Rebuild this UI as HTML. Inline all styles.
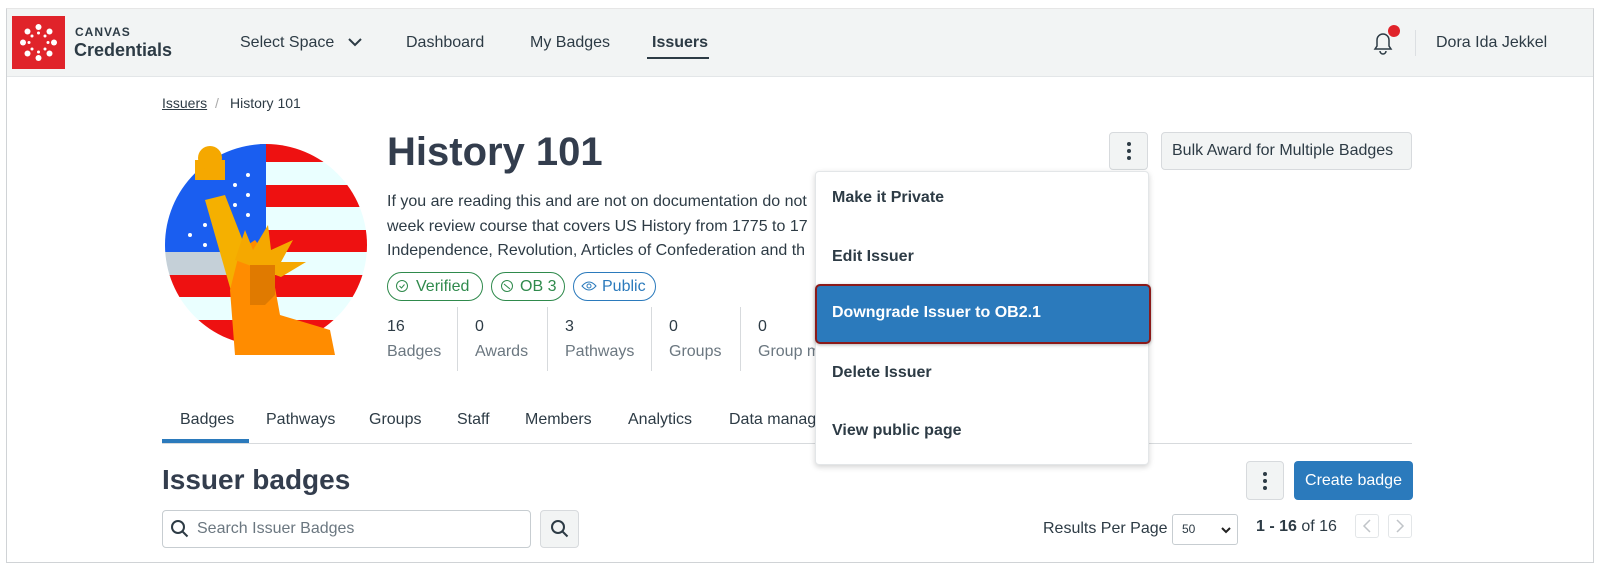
<!DOCTYPE html>
<html><head><meta charset="utf-8"><style>
*{margin:0;padding:0;box-sizing:border-box}
body{width:1600px;height:576px;background:#fff;font-family:"Liberation Sans",sans-serif;color:#2d3b45;position:relative;overflow:hidden}
.a{position:absolute;white-space:nowrap}
.frame{position:absolute;left:6px;top:8px;width:1588px;height:555px;border:1px solid #d0d3d6;border-top:1px solid #e6e6e6}
.hdr{position:absolute;left:7px;top:9px;width:1586px;height:68px;background:#f2f4f4;border-bottom:1px solid #e3e6e8}
.nav{font-size:16px;color:#2d3b45}
.btn{position:absolute;background:#f2f4f4;border:1px solid #d7dadd;border-radius:4px}
.pill{position:absolute;height:29px;border:1px solid #2f8a4c;border-radius:15px;color:#2f8a4c;font-size:16px;line-height:27px;padding-left:28px}
.stat{position:absolute;font-size:16px}
.vl{position:absolute;top:307px;width:1px;height:64px;background:#d7dadd}
.tab{position:absolute;top:411px;font-size:16px}
.mi{position:absolute;left:832px;font-size:16px;font-weight:bold;color:#2d3b45}
.k{position:absolute;width:4px;height:4px;border-radius:2px;background:#2d3b45}
</style></head><body>
<div class="frame"></div>
<div class="hdr"></div>
<!-- logo -->
<div class="a" style="left:12px;top:16px;width:53px;height:53px;background:#e0232a"></div>
<svg class="a" style="left:12px;top:16px" width="53" height="53" viewBox="0 0 53 53">
<g fill="#fff"><circle cx="26.5" cy="11" r="3"/><circle cx="26.5" cy="42" r="3"/><circle cx="11" cy="26.5" r="3"/><circle cx="42" cy="26.5" r="3"/><circle cx="15.5" cy="15.5" r="3"/><circle cx="37.5" cy="15.5" r="3"/><circle cx="15.5" cy="37.5" r="3"/><circle cx="37.5" cy="37.5" r="3"/>
<circle cx="26.5" cy="17" r="1.5"/><circle cx="26.5" cy="36" r="1.5"/><circle cx="17" cy="26.5" r="1.5"/><circle cx="36" cy="26.5" r="1.5"/><circle cx="20" cy="20" r="1.5"/><circle cx="33" cy="20" r="1.5"/><circle cx="20" cy="33" r="1.5"/><circle cx="33" cy="33" r="1.5"/></g></svg>
<div class="a" style="left:75px;top:25px;font-size:12px;font-weight:bold;letter-spacing:1px">CANVAS</div>
<div class="a" style="left:74px;top:40px;font-size:18px;font-weight:bold">Credentials</div>
<div class="a nav" style="left:240px;top:34px">Select Space</div>
<svg class="a" style="left:347px;top:36px" width="16" height="12"><path d="M2 3l6 6 6-6" stroke="#2d3b45" stroke-width="2" fill="none"/></svg>
<div class="a nav" style="left:406px;top:34px">Dashboard</div>
<div class="a nav" style="left:530px;top:34px">My Badges</div>
<div class="a nav" style="left:652px;top:34px;font-weight:bold">Issuers</div>
<div class="a" style="left:647px;top:57px;width:62px;height:2px;background:#2d3b45"></div>
<svg class="a" style="left:1370px;top:30px" width="26" height="26" viewBox="0 0 26 26"><path d="M5 19h16l-2-3v-6a6 6 0 0 0-12 0v6z M10 21a3 3 0 0 0 6 0" stroke="#2d3b45" stroke-width="1.5" fill="none"/></svg>
<div class="a" style="left:1388px;top:25px;width:12px;height:12px;border-radius:6px;background:#e0232a"></div>
<div class="a" style="left:1415px;top:30px;width:1px;height:26px;background:#dcdfe2"></div>
<div class="a nav" style="left:1436px;top:34px">Dora Ida Jekkel</div>
<!-- breadcrumb -->
<div class="a" style="left:162px;top:95px;font-size:14px;text-decoration:underline">Issuers</div>
<div class="a" style="left:215px;top:95px;font-size:14px;color:#aaa">/</div>
<div class="a" style="left:230px;top:95px;font-size:14px">History 101</div>
<!-- image -->
<svg class="a" style="left:160px;top:140px" width="210" height="215" viewBox="0 0 210 215">
<defs><clipPath id="c"><circle cx="106" cy="105" r="101"/></clipPath></defs>
<g clip-path="url(#c)">
<rect x="0" y="0" width="210" height="215" fill="#eaffff"/>
<g fill="#ee1111"><rect x="100" y="0" width="110" height="22"/><rect x="100" y="45" width="110" height="22"/><rect x="100" y="90" width="110" height="22"/><rect x="0" y="135" width="210" height="22"/><rect x="0" y="180" width="210" height="30"/></g>
<rect x="0" y="0" width="106" height="112" fill="#1a5ef0"/>
<rect x="0" y="112" width="100" height="23" fill="#c5d0d8"/>
<g fill="#fff"><circle cx="88" cy="35" r="2"/><circle cx="75" cy="45" r="2"/><circle cx="88" cy="55" r="2"/><circle cx="75" cy="65" r="2"/><circle cx="88" cy="75" r="2"/><circle cx="45" cy="85" r="2"/><circle cx="30" cy="95" r="2"/><circle cx="45" cy="105" r="2"/><circle cx="60" cy="75" r="2"/></g>
</g>
<path d="M45 60 l20 -5 l35 90 l-25 20z" fill="#f5b000"/>
<rect x="35" y="20" width="30" height="20" fill="#f5a800"/>
<ellipse cx="50" cy="18" rx="12" ry="12" fill="#f5a800"/>
<path d="M70 150 L80 110 L95 100 L110 120 L120 175 L170 190 L175 215 L75 215z" fill="#ff8c00"/>
<path d="M75 120 l10 -30 l8 20 l15 -25 l3 25 l22 -10 l-12 22 l25 0 l-25 15z" fill="#f5a800"/>
<path d="M90 125 h25 v30 l-10 10 h-15z" fill="#e07a00"/>
</svg>
<div class="a" style="left:387px;top:130px;font-size:40px;font-weight:bold;color:#333d4d">History 101</div>
<div class="a" style="left:387px;top:190px;font-size:16px;line-height:24.5px">If you are reading this and are not on documentation do not<br>week review course that covers US History from 1775 to 17<br>Independence, Revolution, Articles of Confederation and th</div>
<div class="pill" style="left:387px;top:272px;width:96px">Verified</div>
<svg class="a" style="left:395px;top:279px" width="14" height="14"><circle cx="7" cy="7" r="5.5" stroke="#2f8a4c" fill="none"/><path d="M4.5 7l2 2 3-3.5" stroke="#2f8a4c" fill="none"/></svg>
<div class="pill" style="left:491px;top:272px;width:74px">OB 3</div>
<svg class="a" style="left:500px;top:279px" width="14" height="14"><circle cx="7" cy="7" r="5.5" stroke="#2f8a4c" fill="none"/><path d="M4 5l6 5" stroke="#2f8a4c"/></svg>
<div class="pill" style="left:573px;top:272px;width:83px;border-color:#2b7abc;color:#2b7abc">Public</div>
<svg class="a" style="left:581px;top:280px" width="16" height="12"><path d="M1 6q7-8 14 0q-7 8-14 0z" stroke="#2b7abc" fill="none"/><circle cx="8" cy="6" r="2" stroke="#2b7abc" fill="none"/></svg>
<div class="stat" style="left:387px;top:318px">16</div><div class="stat" style="left:387px;top:343px;color:#6b7780">Badges</div>
<div class="vl" style="left:457px"></div>
<div class="stat" style="left:475px;top:318px">0</div><div class="stat" style="left:475px;top:343px;color:#6b7780">Awards</div>
<div class="vl" style="left:547px"></div>
<div class="stat" style="left:565px;top:318px">3</div><div class="stat" style="left:565px;top:343px;color:#6b7780">Pathways</div>
<div class="vl" style="left:651px"></div>
<div class="stat" style="left:669px;top:318px">0</div><div class="stat" style="left:669px;top:343px;color:#6b7780">Groups</div>
<div class="vl" style="left:740px"></div>
<div class="stat" style="left:758px;top:318px">0</div><div class="stat" style="left:758px;top:343px;color:#6b7780">Group m</div>
<!-- top right buttons -->
<div class="btn" style="left:1109px;top:132px;width:39px;height:38px"></div>
<div class="k" style="left:1127px;top:142px"></div><div class="k" style="left:1127px;top:149px"></div><div class="k" style="left:1127px;top:156px"></div>
<div class="btn" style="left:1161px;top:132px;width:251px;height:38px"></div>
<div class="a" style="left:1172px;top:142px;font-size:16px">Bulk Award for Multiple Badges</div>
<!-- tabs -->
<div class="a" style="left:162px;top:443px;width:1250px;height:1px;background:#d7dadd"></div>
<div class="a" style="left:162px;top:439px;width:87px;height:4px;background:#2b7abc"></div>
<div class="tab" style="left:180px">Badges</div>
<div class="tab" style="left:266px">Pathways</div>
<div class="tab" style="left:369px">Groups</div>
<div class="tab" style="left:457px">Staff</div>
<div class="tab" style="left:525px">Members</div>
<div class="tab" style="left:628px">Analytics</div>
<div class="tab" style="left:729px">Data manag</div>
<div class="a" style="left:162px;top:464px;font-size:28px;font-weight:bold;color:#333d4d">Issuer badges</div>
<div class="a" style="left:162px;top:510px;width:369px;height:38px;border:1px solid #c7cdd1;border-radius:4px"></div>
<svg class="a" style="left:170px;top:519px" width="20" height="20"><circle cx="8" cy="8" r="6" stroke="#2d3b45" stroke-width="2" fill="none"/><path d="M12.5 12.5l5 5" stroke="#2d3b45" stroke-width="2"/></svg>
<div class="a" style="left:197px;top:520px;font-size:16px;color:#6b7780">Search Issuer Badges</div>
<div class="btn" style="left:540px;top:510px;width:39px;height:38px"></div>
<svg class="a" style="left:550px;top:519px" width="20" height="20"><circle cx="8" cy="8" r="6" stroke="#2d3b45" stroke-width="2" fill="none"/><path d="M12.5 12.5l5 5" stroke="#2d3b45" stroke-width="2"/></svg>
<div class="btn" style="left:1246px;top:461px;width:38px;height:39px"></div>
<div class="k" style="left:1263px;top:472px"></div><div class="k" style="left:1263px;top:479px"></div><div class="k" style="left:1263px;top:486px"></div>
<div class="a" style="left:1294px;top:461px;width:119px;height:39px;background:#2b7abc;border-radius:4px;color:#fff;font-size:16px;line-height:39px;text-align:center">Create badge</div>
<div class="a" style="left:1043px;top:520px;font-size:16px">Results Per Page</div>
<div class="a" style="left:1172px;top:514px;width:66px;height:31px;border:1px solid #c7cdd1;border-radius:3px;font-size:12px;line-height:29px;padding-left:9px">50</div>
<svg class="a" style="left:1220px;top:525px" width="12" height="10"><path d="M2 3l4 4 4-4" stroke="#222" stroke-width="2" fill="none"/></svg>
<div class="a" style="left:1256px;top:518px;font-size:16px"><b>1 - 16</b> of 16</div>
<div class="a" style="left:1355px;top:514px;width:24px;height:24px;border:1px solid #e3e6e8;border-radius:3px"></div>
<svg class="a" style="left:1360px;top:518px" width="14" height="16"><path d="M10 2l-6 6 6 6" stroke="#c0c4c8" stroke-width="1.5" fill="none"/></svg>
<div class="a" style="left:1388px;top:514px;width:24px;height:24px;border:1px solid #e3e6e8;border-radius:3px"></div>
<svg class="a" style="left:1393px;top:518px" width="14" height="16"><path d="M4 2l6 6-6 6" stroke="#c0c4c8" stroke-width="1.5" fill="none"/></svg>
<!-- menu -->
<div class="a" style="left:815px;top:171px;width:334px;height:294px;background:#fff;border:1px solid #e3e6e8;border-radius:4px;box-shadow:0 2px 6px rgba(0,0,0,.18)"></div>
<div class="mi" style="top:189px">Make it Private</div>
<div class="mi" style="top:248px">Edit Issuer</div>
<div class="a" style="left:815px;top:284px;width:336px;height:60px;background:#2b7abc;border:2px solid #8b1a1a;border-radius:5px;box-shadow:0 1px 3px rgba(0,0,0,.3)"></div>
<div class="mi" style="top:304px;color:#fff">Downgrade Issuer to OB2.1</div>
<div class="mi" style="top:364px">Delete Issuer</div>
<div class="mi" style="top:422px">View public page</div>
</body></html>
